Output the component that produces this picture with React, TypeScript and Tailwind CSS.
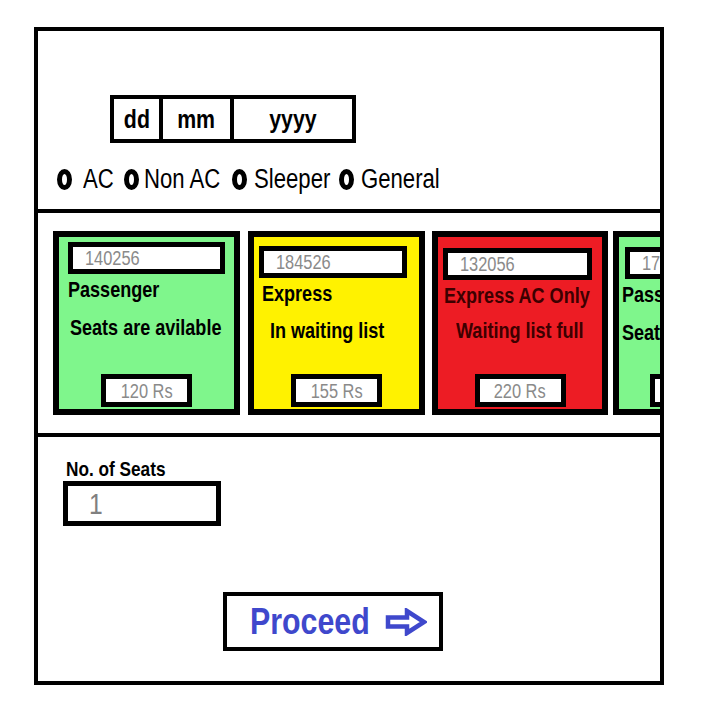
// the mockup uses a condensed Arial; emulate it with a horizontal squeeze
const font = "font-['Liberation_Sans',Arial,sans-serif]";

function Narrow({ children, center }: { children: React.ReactNode; center?: boolean }) {
  return (
    <span className={`inline-block whitespace-nowrap scale-x-[0.82] ${center ? "origin-center" : "origin-left"}`}>
      {children}
    </span>
  );
}

type Train = {
  id: string;
  name: string;
  status: string;
  price: string;
  bg: string;
  text: string;
  width: string;
  boxMt: string;
  boxMl: string;
  boxW: string;
  titleMl: string;
  statusMt: string;
  statusMl: string;
};

const trains: Train[] = [
  { id: "140256", name: "Passenger", status: "Seats are avilable", price: "120 Rs", bg: "bg-[#7ff68c]", text: "text-black", width: "w-[187px]", boxMt: "mt-[5px]", boxMl: "ml-[9px]", boxW: "w-[157px]", titleMl: "ml-[9px]", statusMt: "mt-[16px]", statusMl: "ml-[11px]" },
  { id: "184526", name: "Express", status: "In waiting list", price: "155 Rs", bg: "bg-[#fff200]", text: "text-black", width: "w-[177px]", boxMt: "mt-[9px]", boxMl: "ml-[5px]", boxW: "w-[148px]", titleMl: "ml-[8px]", statusMt: "mt-[15px]", statusMl: "ml-[16px]" },
  { id: "132056", name: "Express AC Only", status: "Waiting list full", price: "220 Rs", bg: "bg-[#ed1c24]", text: "text-[#3d0000]", width: "w-[176px]", boxMt: "mt-[11px]", boxMl: "ml-[5px]", boxW: "w-[149px]", titleMl: "ml-[6px]", statusMt: "mt-[13px]", statusMl: "ml-[18px]" },
  { id: "170256", name: "Passenger", status: "Seats are avilable", price: "120 Rs", bg: "bg-[#7ff68c]", text: "text-black", width: "w-[165px]", boxMt: "mt-[10px]", boxMl: "ml-[6px]", boxW: "w-[150px]", titleMl: "ml-[3px]", statusMt: "mt-[16px]", statusMl: "ml-[3px]" },
];

function Radio({ label, gap, ml, w }: { label: string; gap: string; ml: string; w: string }) {
  return (
    <div className={`flex items-center ${ml}`}>
      <span className="block w-[15px] h-[21px] rounded-[50%] border-[5px] border-black bg-white" />
      <div className={`${gap} ${w} text-[27px] leading-none text-black`}>
        <Narrow>{label}</Narrow>
      </div>
    </div>
  );
}

function TrainCard({ t }: { t: Train }) {
  return (
    <div className={`${t.width} h-[184px] shrink-0 border-[6px] border-black ${t.bg} flex flex-col`}>
      <div className={`${t.boxW} ${t.boxMl} ${t.boxMt} h-[32px] border-[5px] border-black bg-white flex items-center pl-[12px] text-[20px] leading-none text-[#8a8a8a]`}>
        <Narrow>{t.id}</Narrow>
      </div>
      <div className={`${t.titleMl} mt-[5px] text-[22px] leading-none font-bold ${t.text}`}>
        <Narrow>{t.name}</Narrow>
      </div>
      <div className={`${t.statusMl} ${t.statusMt} text-[22px] leading-none font-bold ${t.text}`}>
        <Narrow>{t.status}</Narrow>
      </div>
      <div className="mt-auto mb-[2px] self-center w-[91px] h-[33px] border-[5px] border-black bg-white flex items-center justify-center text-[20px] leading-none text-[#8a8a8a]">
        <Narrow center>{t.price}</Narrow>
      </div>
    </div>
  );
}

export default function App() {
  return (
    <div className={`w-[706px] h-[704px] bg-white pt-[27px] pl-[34px] ${font}`}>
      <div className="w-[630px] h-[658px] border-4 border-black flex flex-col">
        {/* date + class */}
        <div className="h-[182px] border-b-4 border-black pt-[64px]">
          <div className="ml-[72px] w-[246px] h-[48px] border-4 border-black flex text-[26px] font-bold leading-none text-black">
            <div className="w-[49px] border-r-4 border-black flex items-center justify-center"><Narrow center>dd</Narrow></div>
            <div className="w-[71px] border-r-4 border-black flex items-center justify-center"><Narrow center>mm</Narrow></div>
            <div className="flex-1 flex items-center justify-center"><Narrow center>yyyy</Narrow></div>
          </div>
          <div className="flex items-center mt-[23px]">
            <Radio label="AC" gap="ml-[11px]" ml="ml-[19px]" w="w-[31px]" />
            <Radio label="Non AC" gap="ml-[5px]" ml="ml-[10px]" w="w-[76px]" />
            <Radio label="Sleeper" gap="ml-[7px]" ml="ml-[12px]" w="w-[75px]" />
            <Radio label="General" gap="ml-[7px]" ml="ml-[10px]" w="w-[76px]" />
          </div>
        </div>

        {/* trains */}
        <div className="h-[224px] border-b-4 border-black overflow-hidden pt-[18px] pl-[15px] flex">
          <TrainCard t={trains[0]} />
          <div className="ml-[8px]"><TrainCard t={trains[1]} /></div>
          <div className="ml-[7px]"><TrainCard t={trains[2]} /></div>
          <div className="ml-[5px]"><TrainCard t={trains[3]} /></div>
        </div>

        {/* seats + proceed */}
        <div className="flex-1 pt-[21px]">
          <div className="ml-[28px] text-[21px] leading-none font-bold text-black">
            <Narrow>No. of Seats</Narrow>
          </div>
          <div className="ml-[25px] mt-[2px] w-[158px] h-[45px] border-[5px] border-black flex items-center pl-[21px] text-[30px] leading-none text-[#808080]">
            <Narrow>1</Narrow>
          </div>
          <div className="ml-[185px] mt-[66px] w-[220px] h-[59px] border-4 border-black flex items-center pl-[23px]">
            <div className="w-[120px] text-[37px] leading-none font-bold text-[#3f48cc]">
              <Narrow>Proceed</Narrow>
            </div>
            <svg className="ml-[15px] shrink-0" width="42" height="28" viewBox="0 0 42 28" fill="none">
              <path d="M3 9.5 H22 V3 L39 14 L22 25 V18.5 H3 Z" stroke="#3f48cc" strokeWidth="4.5" strokeLinejoin="miter" fill="#ffffff" />
            </svg>
          </div>
        </div>
      </div>
    </div>
  );
}
